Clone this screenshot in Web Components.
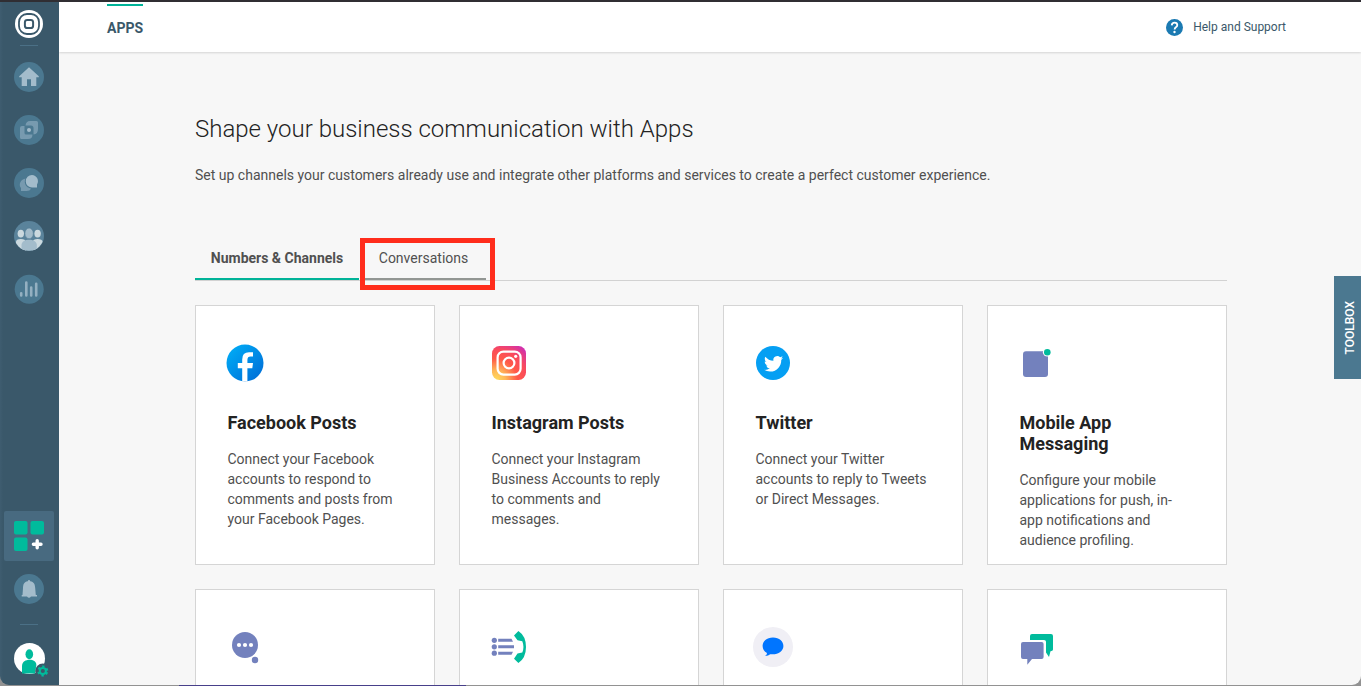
<!DOCTYPE html>
<html lang="en">
<head>
<meta charset="utf-8">
<title>Apps</title>
<style>
html,body{margin:0;height:100%;overflow:hidden;background:#929292}
body{font-family:Roboto,"Liberation Sans",sans-serif;color:#505050}
</style>
</head>
<body>
<portal-shell></portal-shell>
<script>
const icons = {
logo:[28,28,'<circle cx="14" cy="14" r="14" fill="#fff"/><rect x="4" y="4" width="20" height="20" rx="8" fill="none" stroke="#3a586a" stroke-width="1.8"/><rect x="9.9" y="9.9" width="8.2" height="8.2" rx="2.4" fill="none" stroke="#3a586a" stroke-width="2"/>'],
home:[30,30,'<circle cx="15" cy="15" r="15" fill="#4b7890"/><path d="M15 5.2L24.8 14.2V15.2H22.3V24H17V17.3H13V24H7.7V15.2H5.2V14.2Z" fill="#a3bccb"/>'],
link:[30,30,'<circle cx="15" cy="15" r="15" fill="#4b7890"/><path d="M16 6H22.5Q24 6 24 7.5V14Q24 19 19.5 19.5V13Q19.5 10.5 17 10.5H11.5Q12 6 16 6Z" fill="#779aaf"/><path d="M6 13Q6 11 8 11H10.5V18Q10.5 19.5 12 19.5H18.5Q18.5 24 14 24H7.5Q6 24 6 22.5Z" fill="#779aaf"/><circle cx="15" cy="15" r="2" fill="#a3bccb"/>'],
chat:[30,30,'<circle cx="15" cy="15" r="15" fill="#4b7890"/><path d="M11.5 10.5C5 12 5 18 7 20V23H12.5Q16 23 17 20.5C12 20 9.5 15 11.5 10.5Z" fill="#779aaf"/><path d="M18 7A6.2 6.2 0 1 0 18 19.5H23V16.5A6.2 6.2 0 0 0 18 7Z" fill="#a3bccb"/>'],
people:[30,30,'<defs><clipPath id="c"><circle cx="15" cy="15" r="14.7"/></clipPath></defs><circle cx="15" cy="15" r="15" fill="#5a839b"/><g clip-path="url(#c)"><g fill="#cbd9df"><ellipse cx="6.8" cy="12.6" rx="3.2" ry="3.9"/><ellipse cx="23.6" cy="12.6" rx="3.2" ry="3.9"/><path d="M2 21Q2 18 6.8 18T12 21V30H2ZM18.5 21Q19 18 23.6 18T29 21V30H18.5Z"/></g><ellipse cx="15.1" cy="12.4" rx="4.2" ry="5.3" fill="#a3bccb" stroke="#5a839b" stroke-width=".6"/><path d="M7.5 30V24C7.5 17 22.8 17 22.8 24V30Z" fill="#a3bccb"/></g>'],
stats:[30,30,'<circle cx="15.2" cy="15.3" r="14.5" fill="#4b7890"/><path d="M7.2 19.3V21.5M12.3 8.5V21.5M17.2 13.5V21.5M22.2 9.8V21.5" stroke="#94b0c1" stroke-width="2.6" stroke-linecap="round"/>'],
apps:[50,50,'<rect width="50" height="50" rx="2" fill="#486a80"/><g fill="#00bb9c"><rect x="10" y="10" width="13.5" height="13.5" rx="2"/><rect x="26.5" y="10" width="13.5" height="13.5" rx="2"/><rect x="10" y="26.5" width="13.5" height="13.5" rx="2"/></g><path d="M33.2 29.8V36.8M29.4 33.3H37" stroke="#fff" stroke-width="3.4" stroke-linecap="round"/>'],
bell:[30,30,'<circle cx="15" cy="15" r="15" fill="#4b7890"/><path d="M15 6Q16 6 16.2 7.2C20 8 21 10 21.2 14L21.8 21H23V22.6H17Q15 25 13 22.6H7.7V21H8.5L9 14C9.2 10 10 8 13.8 7.2Q14 6 15 6Z" fill="#a3bccb"/>'],
user:[36,34,'<circle cx="15.5" cy="15.5" r="15.5" fill="#fff"/><g fill="#00bb9c"><ellipse cx="15.3" cy="11.2" rx="3.8" ry="5"/><path d="M8 30.5V23C8 15 22.4 15 22.4 22L21 30.5Z"/></g><circle cx="28.8" cy="28" r="7.6" fill="#3a586a"/><circle cx="28.8" cy="28" r="3.1" fill="none" stroke="#00bb9c" stroke-width="2"/><circle cx="28.8" cy="28" r="4.5" fill="none" stroke="#00bb9c" stroke-width="2" stroke-dasharray="2.3 2.412" stroke-dashoffset="-1.2"/>'],
facebook:[40,40,'<defs><linearGradient id="g" x1="0" y1="0" x2="1" y2="1"><stop offset=".1" stop-color="#00aaf5"/><stop offset=".9" stop-color="#0070d8"/></linearGradient></defs><circle cx="20" cy="20" r="18.5" fill="url(#g)"/><path d="M17.2 38.5V25.2H12.8V20H17.2V16.4Q17.2 9.2 24 9.2H28V13.6H25.5Q22.4 13.6 22.4 17V20H28L27.3 25.2H22.4V38.5Z" fill="#fff"/>'],
instagram:[40,40,'<defs><radialGradient id="g" cx=".12" cy="1" r="1.25"><stop offset="0" stop-color="#ffdc5c"/><stop offset=".22" stop-color="#ffb858"/><stop offset=".5" stop-color="#ff5948"/><stop offset=".72" stop-color="#fa4b5c"/><stop offset="1" stop-color="#ce2cb4"/></radialGradient></defs><rect x="3" y="3" width="34" height="34" rx="7.5" fill="url(#g)"/><rect x="8.6" y="8.6" width="23" height="23" rx="5.8" fill="none" stroke="#fff" stroke-width="2.2"/><circle cx="20" cy="20" r="5.4" fill="none" stroke="#fff" stroke-width="2.2"/><circle cx="26.7" cy="13.3" r="1.6" fill="#fff"/>'],
twitter:[40,40,'<circle cx="20" cy="20" r="17" fill="#059ff3"/><path transform="translate(11 11.2) scale(.8)" d="M23.953 4.57a10 10 0 01-2.825.775 4.958 4.958 0 002.163-2.723c-.951.555-2.005.959-3.127 1.184a4.92 4.92 0 00-8.384 4.482C7.69 8.095 4.067 6.13 1.64 3.162a4.822 4.822 0 00-.666 2.475c0 1.71.87 3.213 2.188 4.096a4.904 4.904 0 01-2.228-.616v.06a4.923 4.923 0 003.946 4.827 4.996 4.996 0 01-2.212.085 4.936 4.936 0 004.604 3.417 9.867 9.867 0 01-6.102 2.105c-.39 0-.779-.023-1.17-.067a13.995 13.995 0 007.557 2.209c9.053 0 13.998-7.496 13.998-13.985 0-.21 0-.42-.015-.63A9.935 9.935 0 0024 4.59z" fill="#fff"/>'],
mobile:[40,40,'<rect x="6" y="8.2" width="25" height="25.8" rx="3" fill="#7381bd"/><circle cx="30.3" cy="9.2" r="4.4" fill="#fff"/><circle cx="30.3" cy="9.2" r="3.3" fill="#00bb9c"/>'],
dots:[40,40,'<circle cx="20" cy="18" r="13" fill="#7381bd"/><circle cx="30" cy="33" r="3.2" fill="#7381bd"/><g fill="#fff"><circle cx="14" cy="18" r="2.1"/><circle cx="20" cy="18" r="2.1"/><circle cx="26" cy="18" r="2.1"/></g>'],
phone:[40,40,'<g fill="#7381bd"><circle cx="5.3" cy="13.3" r="2.6"/><circle cx="5.3" cy="19.8" r="2.6"/><circle cx="5.3" cy="26.2" r="2.6"/><path d="M9.2 11.8H22.5L24 14.8H9.2ZM9.2 18.3H25V21.3H9.2ZM9.2 24.7H24L22.5 27.7H9.2Z"/></g><path d="M29.4 4Q37 9 37 20T29.4 36L25 31.8L28.5 26.6L33.3 25.6Q35.6 20 33.3 14.2L28.5 13.2L25 8.5Z" fill="#00bb9c"/>'],
message:[40,40,'<circle cx="20" cy="20" r="20" fill="#f0eff5"/><path d="M20 10.6C13.6 10.6 9.6 14.5 9.6 19Q9.6 23.5 14 26Q14 28 12 29Q15.5 29 17.2 27.2C24.5 28.2 30.4 24.5 30.4 19C30.4 14.5 26.4 10.6 20 10.6Z" fill="#0075ff"/>'],
chats:[40,40,'<path d="M15 7H34Q36 7 36 9V22.5Q36 24.2 33.5 24.2L32 30L29 25.5V14.8Q29 13.1 27 13.1H13V9Q13 7 15 7Z" fill="#00bb9c"/><path d="M6 15H24.6Q26.6 15 26.6 17V30Q26.6 32 24.6 32H15L10.3 37.7V32H6Q4 32 4 30V17Q4 15 6 15Z" fill="#7381bd"/>'],
help:[17,17,'<circle cx="8.5" cy="8.5" r="8.5" fill="#1b7ab2"/><path d="M5.7 6.4Q5.9 3.6 8.6 3.6Q11.3 3.6 11.3 6.1Q11.3 7.4 9.9 8.3Q8.6 9.2 8.6 10.6" fill="none" stroke="#fff" stroke-width="1.8"/><circle cx="8.5" cy="13" r="1.2" fill="#fff"/>']
};
class UiIcon extends HTMLElement{
 connectedCallback(){
  const [w,h,body]=icons[this.getAttribute('name')];
  this.attachShadow({mode:'open'}).innerHTML=`<style>:host{display:block;flex:none}svg{display:block}</style><svg width="${w}" height="${h}" viewBox="0 0 ${w} ${h}" aria-hidden="true">${body}</svg>`;
 }
}
customElements.define('ui-icon',UiIcon);

const define=(name,html)=>{
 const template=document.createElement('template');
 template.innerHTML=html;
 customElements.define(name,class extends HTMLElement{
  constructor(){super();this.attachShadow({mode:'open'}).append(template.content.cloneNode(true));}
 });
};

define('side-nav',`<style>
:host{display:flex;flex-direction:column;justify-content:space-between;width:59px;height:683px;flex:none;box-sizing:border-box;background:linear-gradient(90deg,#3f5d70,#3a586a 3px);border-bottom-left-radius:9px;overflow:hidden}
.group{display:flex;flex-direction:column;align-items:center;width:58px}
.top{padding-top:8px}
.line{width:18px;height:1px;background:#4b7086}
.main{display:flex;flex-direction:column;gap:23px;padding-top:16px}
.top .line{margin-top:7px}
.bell{margin-top:13px}
.bottom .line{margin:20px 0 18px}
.user{width:30px;margin-bottom:8px}
</style>
<div class="group top"><ui-icon name="logo"></ui-icon><div class="line"></div>
<div class="main"><ui-icon name="home"></ui-icon><ui-icon name="link"></ui-icon><ui-icon name="chat"></ui-icon><ui-icon name="people"></ui-icon><ui-icon name="stats"></ui-icon></div></div>
<div class="group bottom"><ui-icon name="apps"></ui-icon><ui-icon class="bell" name="bell"></ui-icon><div class="line"></div><ui-icon class="user" name="user"></ui-icon></div>`);

define('top-bar',`<style>
:host{display:flex;justify-content:space-between;height:50px;box-sizing:border-box;padding:2px 75px 0 48px;background:#fff;box-shadow:0 1px 2px #00000024;color:#3a586a;flex:none;position:relative}
.tab{height:46px;border-top:2px solid #00b398;font:700 14px/45px Roboto,sans-serif;width:36px;white-space:nowrap}
.help{display:flex;align-items:center;gap:10px;height:46px;font-size:12px}
</style><div class="tab">APPS</div><div class="help"><ui-icon name="help"></ui-icon><span>Help and Support</span></div>`);

define('tab-strip',`<style>
:host{display:flex;height:42px;gap:2px;border-bottom:1px solid #d2d2d2;box-sizing:border-box;font-size:14px;line-height:38px;color:#505050}
div{box-sizing:border-box;height:41px;border-bottom:2px solid #00b398;text-align:center;white-space:nowrap}
.on{width:164px;font-weight:700}
.hover{position:relative;width:125px;border-color:#929693}
.mark{position:absolute;left:-.6px;top:-1px;width:135px;height:52px;border:5px solid #ff2d1c}
</style><div class="on">Numbers &amp; Channels</div><div class="hover">Conversations<div class="mark"></div></div>`);

define('app-card',`<style>
:host{display:block;box-sizing:border-box;width:240px;height:260px;border:1px solid #d5d5d5;background:#fff;padding:37px 31px 0 31.5px}
.pic{display:block;height:40px;margin-left:-2.5px}
h2{margin:29px 0 0;font-size:18px;line-height:21px;font-weight:700;color:#232323}
p{margin:16px 0 0;font-size:14px;line-height:20px;color:#505050;white-space:nowrap}
</style><slot class="pic" name="icon"></slot><h2><slot name="title"></slot></h2><p><slot></slot></p>`);

const card=(icon,title,text)=>`<app-card><ui-icon slot="icon" name="${icon}"></ui-icon>${title?`<span slot="title">${title}</span>${text}`:''}</app-card>`;
define('apps-page',`<style>
:host{display:block;box-sizing:border-box;flex:1;min-height:0;overflow:hidden;background:#f7f7f7;padding:61px 134px 0 136px}
h1{margin:0;font-size:24px;line-height:32px;font-weight:300;color:#232323}
.lead{margin:20px 0 54px;font-size:14px;line-height:20px}
.grid{display:grid;grid-template-columns:repeat(4,240px);gap:24px;margin-top:24px}
</style><h1>Shape your business communication with Apps</h1>
<p class="lead">Set up channels your customers already use and integrate other platforms and services to create a perfect customer experience.</p>
<tab-strip></tab-strip>
<div class="grid">${card('facebook','Facebook Posts','Connect your Facebook<br>accounts to respond to<br>comments and posts from<br>your Facebook Pages.')}${card('instagram','Instagram Posts','Connect your Instagram<br>Business Accounts to reply<br>to comments and<br>messages.')}${card('twitter','Twitter','Connect your Twitter<br>accounts to reply to Tweets<br>or Direct Messages.')}${card('mobile','Mobile App<br>Messaging','Configure your mobile<br>applications for push, in-<br>app notifications and<br>audience profiling.')}${card('dots')}${card('phone')}${card('message')}${card('chats')}</div>`);

define('toolbox-tab',`<style>
:host{position:absolute;right:0;top:276px;width:27px;height:103px;background:#4b7890;color:#fff;display:flex;align-items:center;justify-content:center}
span{writing-mode:vertical-rl;transform:rotate(180deg);font-size:12px;font-weight:500;margin-left:4px}
</style><span>TOOLBOX</span>`);

define('portal-shell',`<style>
:host{display:flex;flex-direction:column;width:1361px;height:686px;box-sizing:border-box;border-top:2px solid #302e33;background:#929292;position:relative;overflow:hidden}
.row{display:flex;height:683px;flex:none}
.page{display:flex;flex-direction:column;flex:1;min-width:0;border-bottom-right-radius:9px;overflow:hidden}
.edge{width:287px;height:1px;margin-left:179px;background:#48408a}
toolbox-tab{top:274px}
</style><div class="row"><side-nav></side-nav><div class="page"><top-bar></top-bar><apps-page></apps-page></div></div><div class="edge"></div><toolbox-tab></toolbox-tab>`);
</script>
</body>
</html>
